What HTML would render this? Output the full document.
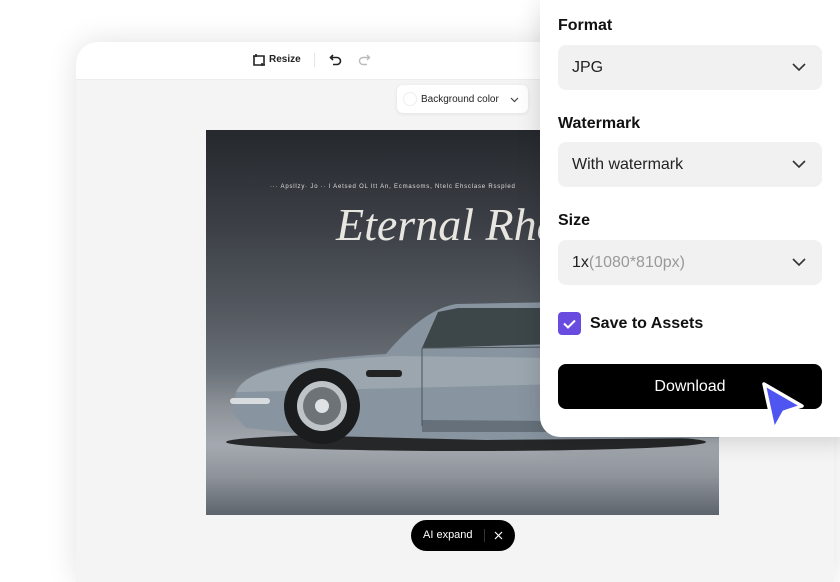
<!DOCTYPE html>
<html><head><meta charset="utf-8"><style>
*{margin:0;padding:0;box-sizing:border-box}
body{width:840px;height:560px;overflow:hidden;background:#fff;font-family:"Liberation Sans",sans-serif;position:relative}
.win{position:absolute;left:76px;top:42px;width:758px;height:540px;background:#f4f4f4;border-radius:22px 0 0 0;box-shadow:0 0 30px rgba(0,0,0,.12);overflow:hidden}
.tb{position:absolute;left:0;top:0;width:100%;height:38px;background:#fff;border-bottom:1px solid #ececec}
.img{position:absolute;left:130px;top:88px;width:513px;height:385px;overflow:hidden;
background:linear-gradient(180deg,#25282d 0%,#3c4046 25%,#555a61 48%,#6a7077 62%,#8d9299 72%,#a4a9b0 82%,#8e939a 90%,#5e646c 100%)}
.panel{position:absolute;left:540px;top:0;width:310px;height:437px;background:#fff;border-radius:0 0 0 20px;box-shadow:0 4px 24px rgba(0,0,0,.15)}
.lbl{position:absolute;left:18px;font-size:16px;font-weight:bold;color:#111}
.sel{position:absolute;left:18px;width:264px;height:45px;background:#f1f1f1;border-radius:8px;font-size:16px;color:#222;padding:0 14px;line-height:45px}
.sel svg{position:absolute;right:16px;top:18px}
</style></head><body>
<div class="win">
 <div class="tb">
  <svg style="position:absolute;left:176px;top:11px" width="14" height="14" viewBox="0 0 14 14" fill="none" stroke="#222" stroke-width="1.6"><path d="M2 3v9h10V3H2M4 1v3M10 10v3M1 3h3M10 12h3"/></svg>
  <span style="position:absolute;left:193px;top:12px;font-size:10px;font-weight:bold;color:#222">Resize</span>
  <div style="position:absolute;left:238px;top:11px;width:1px;height:14px;background:#e5e5e5"></div>
  <svg style="position:absolute;left:253px;top:11px" width="14" height="14" viewBox="0 0 14 14" fill="none" stroke="#222" stroke-width="1.6"><path d="M4 2L1.5 4.5 4 7M1.5 4.5H8a3.5 3.5 0 010 7H4"/></svg>
  <svg style="position:absolute;left:281px;top:11px" width="14" height="14" viewBox="0 0 14 14" fill="none" stroke="#bbb" stroke-width="1.4"><path d="M10 2l2.5 2.5L10 7M12.5 4.5H6a3.5 3.5 0 000 7h4"/></svg>
 </div>
 <div style="position:absolute;left:321px;top:43px;width:131px;height:28px;background:#fff;border-radius:6px;box-shadow:0 1px 4px rgba(0,0,0,.08)">
  <div style="position:absolute;left:6px;top:7px;width:14px;height:14px;border-radius:50%;border:1px solid #eee"></div>
  <span style="position:absolute;left:24px;top:9px;font-size:10px;color:#222">Background color</span>
  <svg style="position:absolute;left:113px;top:12px" width="9" height="6" viewBox="0 0 9 6" fill="none" stroke="#444" stroke-width="1.2"><path d="M1 1l3.5 3.5L8 1"/></svg>
 </div>
 <div class="img">
  <div style="position:absolute;left:64px;top:54px;font-size:6px;color:#ddd;letter-spacing:.8px;white-space:nowrap">··· Apsllzy· Jo ·· l Aetsed OL ltt An, Ecmasoms, Ntelc Ehsclase Rsspled</div>
  <div style="position:absolute;left:130px;top:68px;font-family:'Liberation Serif',serif;font-style:italic;font-size:46px;color:#e8e6e0;white-space:nowrap">Eternal Rhapsody</div>
  <svg style="position:absolute;left:0;top:0" width="513" height="385" viewBox="0 0 513 385">
   <ellipse cx="260" cy="312" rx="240" ry="9" fill="#111" opacity=".85"/>
   <path d="M30 262 C40 240 80 230 180 224 C200 200 225 178 250 174 L360 172 L420 174 L513 176 L513 308 L280 310 L120 306 L40 298 L26 282Z" fill="#8894a0"/>
   <path d="M30 262 C40 240 80 232 190 226 L513 230 L513 250 L40 262Z" fill="#a4aeb4" opacity=".7"/>
   <path d="M232 182 L252 178 L350 178 L350 214 L216 218Z" fill="#3d4649"/>
   <path d="M216 290 L513 292 L513 302 L216 302Z" fill="#65707a"/>
   <path d="M216 218 L513 216 M216 218 L216 296" stroke="#4a5357" stroke-width="1" fill="none"/>
   <rect x="160" y="240" width="36" height="7" rx="3" fill="#222"/>
   <circle cx="116" cy="276" r="38" fill="#1a1c1e"/>
   <circle cx="116" cy="276" r="25" fill="#bfc4c8"/>
   <circle cx="116" cy="276" r="19" fill="#6d7377"/>
   <circle cx="116" cy="276" r="7" fill="#e0e3e5"/>
   <rect x="24" y="268" width="40" height="6" rx="3" fill="#d8dcdf"/>
  </svg>
 </div>
 <div style="position:absolute;left:335px;top:478px;width:104px;height:31px;background:#000;border-radius:16px">
  <span style="position:absolute;left:12px;top:9px;font-size:11px;color:#fff">AI expand</span>
  <div style="position:absolute;left:73px;top:9px;width:1px;height:13px;background:#333"></div>
  <svg style="position:absolute;left:83px;top:11px" width="9" height="9" viewBox="0 0 9 9" stroke="#fff" stroke-width="1.2"><path d="M1 1l7 7M8 1L1 8"/></svg>
 </div>
</div>
<div class="panel">
 <div class="lbl" style="top:17px">Format</div>
 <div class="sel" style="top:45px">JPG<svg width="14" height="9" viewBox="0 0 14 9" fill="none" stroke="#333" stroke-width="1.6"><path d="M1 1l6 6 6-6"/></svg></div>
 <div class="lbl" style="top:115px">Watermark</div>
 <div class="sel" style="top:142px">With watermark<svg width="14" height="9" viewBox="0 0 14 9" fill="none" stroke="#333" stroke-width="1.6"><path d="M1 1l6 6 6-6"/></svg></div>
 <div class="lbl" style="top:212px">Size</div>
 <div class="sel" style="top:240px">1x<span style="color:#999">(1080*810px)</span><svg width="14" height="9" viewBox="0 0 14 9" fill="none" stroke="#333" stroke-width="1.6"><path d="M1 1l6 6 6-6"/></svg></div>
 <div style="position:absolute;left:18px;top:312px;width:23px;height:23px;background:#6a4be0;border-radius:4px"><svg width="23" height="23" viewBox="0 0 23 23" fill="none" stroke="#fff" stroke-width="2"><path d="M6 11.5l4 4 7-7"/></svg></div>
 <div style="position:absolute;left:50px;top:315px;font-size:16px;font-weight:bold;color:#111">Save to Assets</div>
 <div style="position:absolute;left:18px;top:364px;width:264px;height:45px;background:#000;border-radius:8px;color:#fff;font-size:16px;text-align:center;line-height:45px">Download</div>
</div>
<svg style="position:absolute;left:756px;top:378px" width="52" height="58" viewBox="0 0 52 58"><path d="M8 6 L46 28 L28 34 L18 52 Z" fill="#4f55f0" stroke="#fff" stroke-width="3.5" stroke-linejoin="round"/></svg>
</body></html>
